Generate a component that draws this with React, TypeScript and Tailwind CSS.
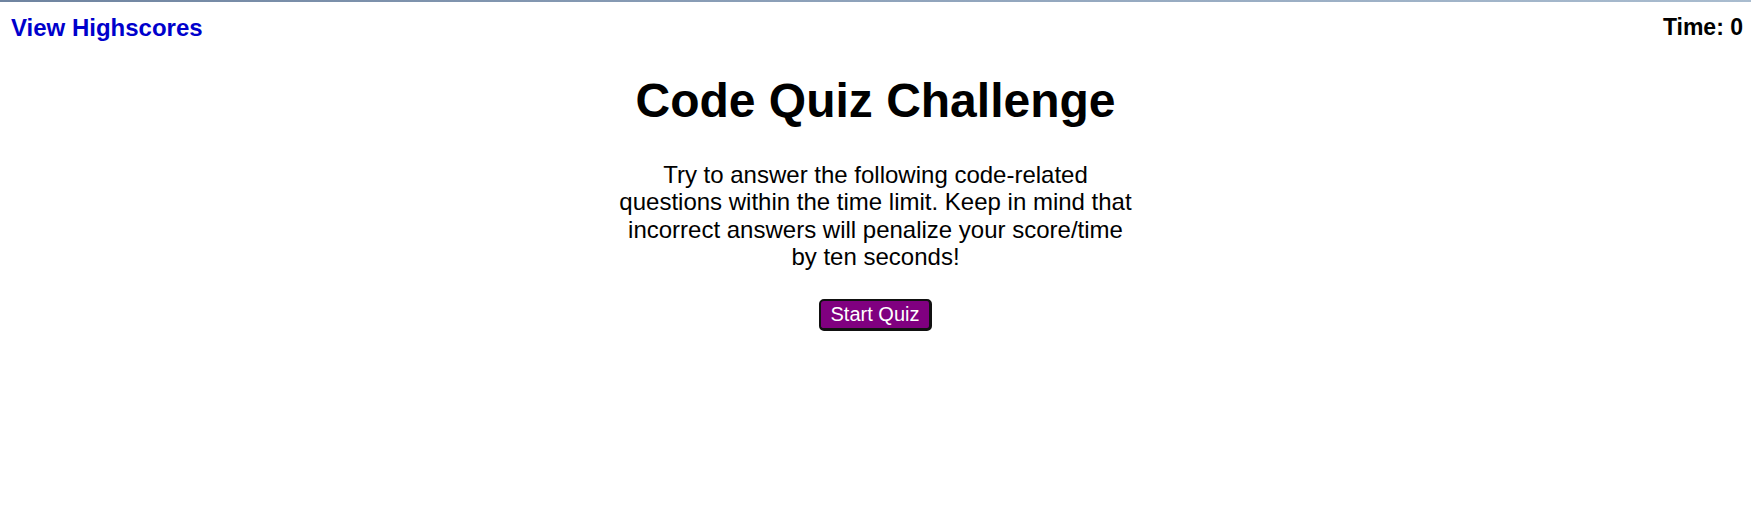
export default function App() {
  return (
    <div className="min-h-[531px] w-full bg-white" style={{ fontFamily: '"Liberation Sans", Arial, sans-serif' }}>
      <div className="h-[2px] w-full bg-gradient-to-r from-[#6f84a0] via-[#8fa3bb] to-[#a9bccf]" />
      <header className="flex items-start justify-between pl-[11px] pr-[8px] pt-[12px]">
        <a href="#" className="text-[24px] font-bold leading-[27.6px] text-[#0000cc]">View Highscores</a>
        <span className="text-[23px] font-bold leading-[27.6px] text-black">Time: 0</span>
      </header>
      <main className="flex flex-col items-center">
        <h1 className="mt-[31px] text-[48px] font-bold leading-[55px] text-black">Code Quiz Challenge</h1>
        <p className="mt-[33px] w-[30%] text-center text-[24px] leading-[27.6px] text-black">
          Try to answer the following code-related questions within the time limit. Keep in mind that incorrect answers will penalize your score/time by ten seconds!
        </p>
        <button className="mt-[28px] rounded-[5px] border-2 border-b-[3px] border-r-[3px] border-[#111] bg-[#800080] px-[10px] py-[2px] text-[20px] leading-[23px] text-white">
          Start Quiz
        </button>
      </main>
    </div>
  );
}
